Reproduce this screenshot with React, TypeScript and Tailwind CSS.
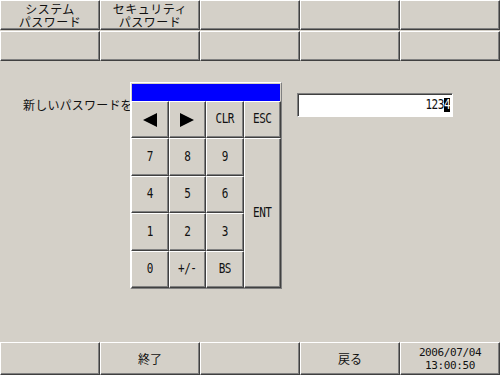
import React from 'react';

const raised =
  'border-t border-l border-t-white border-l-white border-r border-b border-r-[#404040] border-b-[#404040] shadow-[inset_-1px_-1px_0_#808080]';

const jp = 'font-["Noto_Sans_CJK_JP","Noto_Sans",sans-serif]';
const mono = 'font-["DejaVu_Sans_Mono","Liberation_Mono",monospace]';

function Tall({ children }: { children: React.ReactNode }) {
  return <span className={`inline-block scale-y-125 ${mono} text-[11px] tracking-[-0.5px]`}>{children}</span>;
}

function App() {
  const tabs = [
    ['システム', 'パスワード'],
    ['セキュリティ', 'パスワード'],
    null,
    null,
    null,
  ];

  const keys: { label: React.ReactNode; cls?: string }[] = [
    {
      label: (
        <svg width="16" height="14" viewBox="0 0 16 14">
          <polygon points="1,7 15,0 15,14" fill="#000" />
        </svg>
      ),
    },
    {
      label: (
        <svg width="16" height="14" viewBox="0 0 16 14">
          <polygon points="15,7 1,0 1,14" fill="#000" />
        </svg>
      ),
    },
    { label: <Tall>CLR</Tall> },
    { label: <Tall>ESC</Tall> },
    { label: <Tall>7</Tall> },
    { label: <Tall>8</Tall> },
    { label: <Tall>9</Tall> },
    { label: <Tall>ENT</Tall>, cls: 'row-span-4' },
    { label: <Tall>4</Tall> },
    { label: <Tall>5</Tall> },
    { label: <Tall>6</Tall> },
    { label: <Tall>1</Tall> },
    { label: <Tall>2</Tall> },
    { label: <Tall>3</Tall> },
    { label: <Tall>0</Tall> },
    { label: <Tall>+/-</Tall> },
    { label: <Tall>BS</Tall> },
  ];

  return (
    <div className="w-[500px] h-[375px] bg-[#d4d0c8] flex flex-col text-[#111] overflow-hidden">
      {/* Top tabs */}
      <div className="grid grid-cols-5 grid-rows-[30px_30px] gap-y-[1px]">
        {tabs.map((t, i) => (
          <div key={i} className={`${raised} flex flex-col items-center justify-center ${jp} text-[11px] leading-[13px]`}>
            {t && (
              <>
                <span className="text-[12px] leading-[13px] tracking-[0.5px]">{t[0]}</span>
                <span className="text-[12px] leading-[13px] tracking-[0.5px]">{t[1]}</span>
              </>
            )}
          </div>
        ))}
        {[0, 1, 2, 3, 4].map((i) => (
          <div key={'r' + i} className={raised} />
        ))}
      </div>

      {/* Main area */}
      <div className="relative flex-1">
        <div className="flex items-center mt-[32px]">
          <div className={`w-[297px] pl-[23px] ${jp} text-[12px] tracking-[0.2px] leading-none`}>新しいパスワードを</div>
          <div className="w-[156px] h-[24px] bg-white border-t border-l border-t-[#808080] border-l-[#808080] border-b border-r border-b-white border-r-white shadow-[inset_1px_1px_0_#404040] flex items-center justify-end pr-[2px]">
            <Tall>123</Tall>
            <span className="bg-black text-white h-[14px] flex items-center">
              <Tall>4</Tall>
            </span>
          </div>
        </div>

        {/* Keypad popup */}
        <div className="absolute left-[130px] top-[21px] w-[152px] border-t border-l border-t-white border-l-white border-b border-r border-b-[#808080] border-r-[#808080] bg-[#d4d0c8]">
          <div className="h-[17px] mx-[1px] mt-[1px] bg-[#0000ff]" />
          <div className="grid grid-cols-4 grid-rows-[repeat(5,37.4px)]">
            {keys.map((k, i) => (
              <div key={i} className={`${raised} flex items-center justify-center ${k.cls ?? ''}`}>
                {k.label}
              </div>
            ))}
          </div>
        </div>
      </div>

      {/* Bottom bar */}
      <div className="grid grid-cols-5 h-[33px]">
        <div className={raised} />
        <div className={`${raised} flex items-center justify-center ${jp} text-[12px]`}>終了</div>
        <div className={raised} />
        <div className={`${raised} flex items-center justify-center ${jp} text-[12px]`}>戻る</div>
        <div className={`${raised} flex flex-col items-center justify-center ${mono} text-[11px] leading-[13px] tracking-[-0.4px]`}>
          <span>2006/07/04</span>
          <span>13:00:50</span>
        </div>
      </div>
    </div>
  );
}

export default App;
